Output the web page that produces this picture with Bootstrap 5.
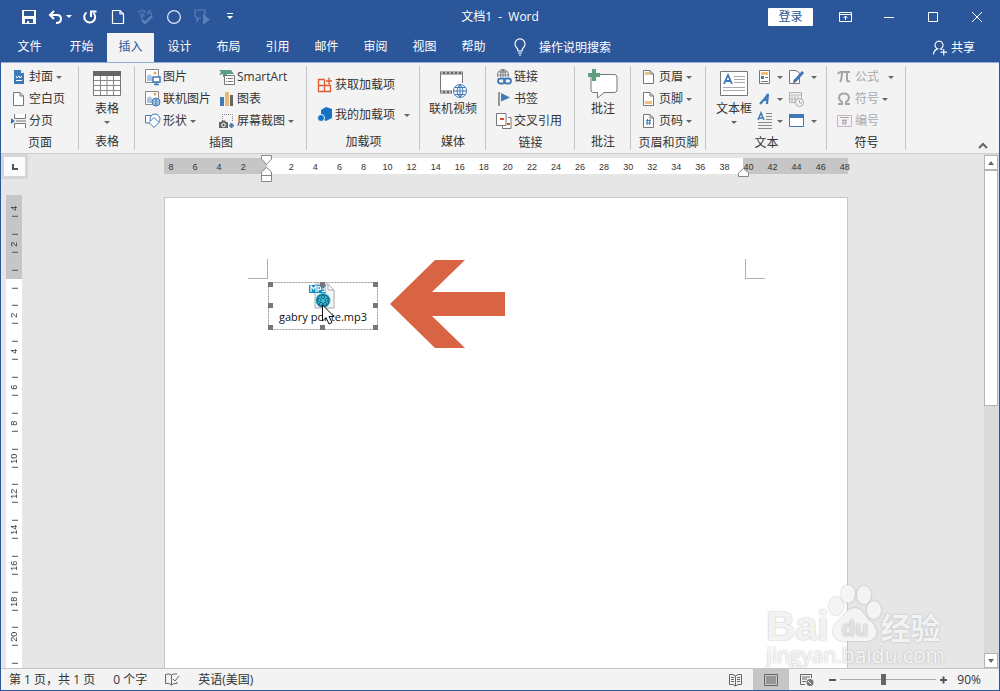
<!DOCTYPE html>
<html lang="zh-CN">
<head>
<meta charset="utf-8">
<meta name="viewport" content="width=device-width, initial-scale=1">
<title>文档1 - Word</title>
<link href="https://cdn.jsdelivr.net/npm/bootstrap@5.3.0/dist/css/bootstrap.min.css" rel="stylesheet">
<style>
:root{--blue:#2b579a;--ink:#333;--line:#c6c6c6}
body{font-family:"Open Sans","Noto Sans CJK SC",sans-serif;font-size:12px;line-height:16px;color:var(--ink);background:#e6e6e6}
button,a.tab{background:none;border:0;padding:0;color:inherit;text-decoration:none;white-space:nowrap}
svg{display:block;flex:none;overflow:visible}
.win{border:1px solid var(--blue);border-top:0}
.top-area{background:var(--blue);color:#fff}
.titlebar{height:33px}
.side{flex:1 1 0}
.quick{margin-left:14px}
.tool{width:28px;height:32px;display:flex;align-items:center;justify-content:center}
.undo{width:33px;gap:4px}
.wbtn{width:44px}
.login{background:#fff;color:var(--blue);width:45px;height:18px;line-height:18px;border-radius:1px;margin-right:10px}
.doc-title{white-space:pre}
.tabs{height:29px}
.tab{width:47px;margin-left:2px;text-align:center;line-height:28px;display:block;height:29px}
.tab.file{width:57px;margin:0}
.tab.on{background:#f3f3f3;color:var(--blue)}
.ribbon{background:#f3f3f3;border-top:1px solid #92abd6;border-bottom:1px solid #cfcfcf;height:92px;padding-top:3px}
.grp{display:flex;flex-direction:column;position:relative;flex:none}
.grp::after{content:"";position:absolute;right:0;top:0;height:84px;border-right:1px solid #c6c6c6}
.grp-body{height:66px;display:flex}
.grp-name{text-align:center;line-height:22px}
.rows{display:grid;grid-auto-flow:column;grid-template-rows:repeat(3,22px);padding-left:10px;align-items:center;justify-content:start}
.rows.two{grid-template-rows:30px 30px;padding-top:4px;align-content:start}
.cmd{display:flex;align-items:center;gap:2px;height:22px}
.cmd.arrow::after,.big.arrow::after,.undo::after{content:"";border:3px solid transparent;border-top-color:#666;border-bottom:0;margin-left:1px}
.undo::after{border-top-color:#fff;margin:0}
.big{display:flex;flex-direction:column;align-items:center;margin:0 auto;padding-top:4px}
.big svg{margin-bottom:5px}
.big.arrow::after{margin:4px 0 0}
.dim{color:#aaa}
.w1{width:78px}.w2{width:56px}.w3{width:172px}.w4{width:113px}.w5{width:66px}.w6{width:89px}.w7{width:56px}.w8{width:75px}.w9{width:121px}.w10{width:79px}
.pics{grid-template-columns:74px auto}
.txt{grid-template-columns:30px 30px;padding-left:6px}
.txt .arrow::after{margin-left:3px}
.textbox{margin:0 0 0 10px}
.work{min-height:0;overflow:hidden;position:relative}
.left-col{width:27px;overflow:hidden}
.selector{height:26px;border:3px solid #d6d6d6;background:#fcfcfc;margin-bottom:16px;display:flex;align-items:center;justify-content:center}
.vtrack{margin:0 6px 0 5px;overflow:hidden;background:linear-gradient(#c6c6c6 84px,#fff 84px);font:9px/16px "Liberation Sans",sans-serif}
.vnums{height:501px;margin-top:-5px;display:flex;flex-direction:column}
.vnums span{flex:1 1 0;display:flex;justify-content:center;align-items:center;position:relative;writing-mode:vertical-rl;transform:rotate(180deg)}
.vnums span::before,.vnums span::after{content:"";position:absolute;left:4px;width:6px;height:1px;background:#555}
.vnums span::before{top:9px}.vnums span::after{bottom:8px}
.vnums span.first::after{display:none}
.hruler{width:684px;height:16px;margin:4px auto 23px;position:relative;background:linear-gradient(90deg,#c6c6c6 103px,#fff 103px,#fff 579px,#c6c6c6 579px);font:9px/18px "Liberation Sans",sans-serif}
.hnums{display:flex;justify-content:space-between;padding-left:1px;margin-right:-3px}
.hnums span{width:12px;text-align:center}
.mk-l{position:absolute;left:97px;top:-3px}
.mk-r{position:absolute;left:574px;top:10px}
.sheet{width:684px;margin:0 auto;background:#fff;border:1px solid var(--line);border-bottom:0;position:relative}
.corners{padding:61px 82px 0 83px}
.corner{width:20px;height:20px;border:solid #b0b0b0;border-width:0 1px 1px 0}
.corner.r{border-width:0 0 1px 1px}
.ole{width:110px;height:48px;margin:3px 0 0 103px;position:relative;text-align:center}
.ole-name{font-size:11px;color:#111;padding-top:27px}
.over{position:absolute;left:0;top:0}
.pointer{position:absolute;left:225px;top:61px}
.sbar{width:15px;background:#dadada;padding-top:1px}
.sbar button,.thumb{background:#fff;border:1px solid #b4b4b4;margin-right:1px}
.sbar button{height:15px;display:flex;align-items:center;justify-content:center}
.thumb{height:236px}
.mark-wm{position:absolute;right:54px;bottom:0;color:rgba(255,255,255,.85);text-shadow:0 0 2px #aaa;pointer-events:none;white-space:nowrap}
.wm-bai{font:bold 40px/32px "Liberation Sans",sans-serif}
.wm-cn{font:bold 30px/32px "Noto Sans CJK SC",sans-serif}
.wm-url{font:21px/26px "Open Sans",sans-serif}
.paw{filter:drop-shadow(0 0 1px #aaa)}
.status{background:#f3f3f3;border-top:1px solid var(--line);height:22px}
.view{width:36px;height:21px;display:flex;align-items:center;justify-content:center}
.view.on{background:#c6c6c6}
.zoom{appearance:none;width:96px;height:16px;background:linear-gradient(#aaa,#aaa) center/100% 1px no-repeat}
.zoom::-webkit-slider-thumb{appearance:none;width:5px;height:11px;background:#666}
.stat{margin-right:18px}
.pct{margin:0 18px 0 10px}
</style>
</head>
<body>
<div class="win vh-100 d-flex flex-column">
<header class="top-area">
  <div class="titlebar d-flex align-items-center">
    <div class="side"><div class="quick d-flex">
      <button class="tool" aria-label="保存"><svg width="14" height="14" viewBox="0 0 14 14"><path fill="#fff" fill-rule="evenodd" d="M0 0H14V14H0ZM2 1V6H12V1ZM3 9V13H5V11H7V13H11V9Z"/></svg></button>
      <button class="tool undo" aria-label="撤消"><svg width="14" height="14" viewBox="0 0 14 14"><path fill="none" stroke="#fff" stroke-width="2" d="M6 1 2 5l4 4M2 5h7q4 0 4 4t-5 4"/></svg></button>
      <button class="tool" aria-label="重复"><svg width="14" height="14" viewBox="0 0 14 14"><path fill="none" stroke="#fff" stroke-width="2" d="M3.5 2.500A5.500 5.500 0 1 0 10.500 3M8 7V1.500H13.500"/></svg></button>
      <button class="tool" aria-label="新建"><svg width="12" height="14" viewBox="0 0 12 14"><path fill="none" stroke="#fff" stroke-width="1.200" d="M.5.5H8L11.500 4V13.500H.5ZM8 .5V4H11.500"/></svg></button>
      <button class="tool" aria-label="拼写和语法"><svg width="16" height="16" viewBox="0 0 16 16" stroke="#5b7fb8" fill="none"><path d="M1 4V2H7V4M4 0V2M2 5H6L4 7V10H3M1 7H7M9 6 11.500 1 14 6M10 4H13"/><path stroke-width="2.500" d="M4 11 7 14 14 7"/></svg></button>
      <button class="tool" aria-label="圆"><svg width="14" height="14" viewBox="0 0 14 14"><circle cx="7" cy="7" r="6.400" fill="none" stroke="#dde6f4" stroke-width="1.200"/></svg></button>
      <button class="tool" aria-label="形状"><svg width="16" height="16" viewBox="0 0 16 16"><path fill="none" stroke="#5b7fb8" stroke-width="1.200" d="M7 9H5L3 12V9H3L1 7V1H11V6"/><path fill="#5b7fb8" d="M9 5 16 10.500 9 16Z"/></svg></button>
      <button class="tool" aria-label="自定义"><svg width="6" height="7" viewBox="0 0 6 7"><path fill="#fff" d="M0 0H6V1H0ZM0 3H6L3 6Z"/></svg></button>
    </div></div>
    <div class="doc-title">文档1  -  Word</div>
    <div class="side d-flex justify-content-end align-items-center">
      <button class="login">登录</button>
      <button class="tool wbtn" aria-label="功能区显示选项"><svg width="13" height="10" viewBox="0 0 13 10"><path fill="none" stroke="#fff" d="M.5.5H12.500V9.500H.5ZM0 2.500H13M6.500 8V4M4.500 6 6.500 4 8.500 6"/></svg></button>
      <button class="tool wbtn" aria-label="最小化"><svg width="10" height="10"><path stroke="#fff" d="M0 5.500H10"/></svg></button>
      <button class="tool wbtn" aria-label="最大化"><svg width="10" height="10"><path fill="none" stroke="#fff" d="M.5.5H9.500V9.500H.5Z"/></svg></button>
      <button class="tool wbtn" aria-label="关闭"><svg width="10" height="10"><path stroke="#fff" d="M0 0 10 10M10 0 0 10"/></svg></button>
    </div>
  </div>
  <nav class="tabs d-flex align-items-center">
    <a class="tab file" href="#">文件</a><a class="tab m-0" href="#">开始</a><a class="tab on" href="#">插入</a><a class="tab" href="#">设计</a><a class="tab" href="#">布局</a><a class="tab" href="#">引用</a><a class="tab" href="#">邮件</a><a class="tab" href="#">审阅</a><a class="tab" href="#">视图</a><a class="tab" href="#">帮助</a>
    <button class="d-flex align-items-center ms-3 gap-2"><svg width="14" height="17" viewBox="1 0 14 17"><path fill="none" stroke="#fff" stroke-width="1.200" d="M6 12Q6 10 4.500 8.500A5 5 0 1 1 11.500 8.500Q10 10 10 12ZM6 14H10M7 16H9"/></svg><span class="ms-1">操作说明搜索</span></button>
    <button class="d-flex align-items-center ms-auto me-4 gap-1"><svg width="14" height="15" viewBox="0 0 15 15"><path fill="none" stroke="#fff" stroke-width="1.200" d="M.5 15Q1 10 5 9A4.300 4.300 0 1 1 8 9L10 10M8 12.500H15M11.500 9V16"/></svg>共享</button>
  </nav>
</header>

<section class="ribbon d-flex position-relative">
  <div class="grp w1"><div class="grp-body"><div class="rows">
    <button class="cmd arrow"><svg width="16" height="16" viewBox="0 0 16 16"><path fill="#3f79b8" d="M3 1H10L13 4V15H3Z"/><path fill="#fff" d="M10 1V4H13Z"/><path fill="none" stroke="#fff" d="M5 7 6 9 8 7 9 9 11 7M5 11.500H11"/></svg>封面</button>
    <button class="cmd"><svg width="16" height="16" viewBox="0 0 16 16"><path fill="#fff" stroke="#777" d="M2.500 1.500H9L12.500 5V14.500H2.500ZM9 1.500V5H12.500"/></svg>空白页</button>
    <button class="cmd"><svg width="16" height="16" viewBox="0 0 16 16"><path fill="#fff" stroke="#777" d="M3.500 1V5.500H14.500V1M3.500 15V10.500H14.500V15M5 8H15"/><path fill="#3f79b8" d="M0 5 4 8 0 11Z"/></svg>分页</button>
  </div></div><div class="grp-name">页面</div></div>

  <div class="grp w2"><div class="grp-body"><button class="big arrow"><svg width="28" height="26" viewBox="0 0 28 26"><path fill="#fff" stroke="#777" d="M.5 2.500H27.500V25.500H.5Z"/><path fill="#666" d="M0 1H28V6H0Z"/><path stroke="#888" d="M1 10.500H27M1 15.500H27M1 20.500H27M7.500 6V25M14 6V25M20.500 6V25"/></svg>表格</button></div><div class="grp-name">表格</div></div>

  <div class="grp w3"><div class="grp-body"><div class="rows pics">
    <button class="cmd"><svg width="16" height="16" viewBox="0 0 16 16"><path fill="#fff" stroke="#888" d="M.5.5H13.500V13.500H.5Z"/><path fill="#a9c5e5" d="M2 12V7L5 5 8 9V12Z"/><circle cx="10" cy="4" r="1.500" fill="#f0a850"/><path fill="#fff" stroke="#3f79b8" stroke-width="1.500" d="M8 8H15V13H8ZM9 15.500H14M11.500 13V15"/></svg>图片</button>
    <button class="cmd"><svg width="16" height="16" viewBox="0 0 16 16"><path fill="#fff" stroke="#888" d="M.5.5H13.500V13.500H.5Z"/><path fill="#a9c5e5" d="M2 12V7L5 5 8 9V12Z"/><circle cx="10" cy="3" r="1.500" fill="#f0a850"/><circle cx="11" cy="11" r="4" fill="#fff" stroke="#3f79b8"/><path fill="none" stroke="#3f79b8" d="M7 11H15M11 7V15M8 9H14M8 13H14"/></svg>联机图片</button>
    <button class="cmd arrow"><svg width="16" height="16" viewBox="0 0 16 16"><path fill="#fff" stroke="#3f79b8" d="M.5 2.500H8V10H.5Z"/><circle cx="10" cy="6" r="5" fill="#fff" stroke="#3f79b8"/><path fill="#fff" stroke="#3f79b8" d="M4 9.500 9 4.500 14 9.500 9 14.500Z"/></svg>形状</button>
    <button class="cmd"><svg width="16" height="16" viewBox="0 0 16 16"><path fill="#5d9e83" d="M0 1H12L15 5H8V8H4V5L0 6L2 3Z"/><path fill="#fff" stroke="#777" d="M5.500 6.500H15.500V15.500H5.500Z"/><path stroke="#777" stroke-dasharray="1 1 5" d="M7 9.500H14M7 12.500H14"/></svg>SmartArt</button>
    <button class="cmd"><svg width="16" height="16" viewBox="0 0 16 16"><path fill="#3f79b8" d="M1 6H5V15H1Z"/><path fill="#e9b872" d="M6 1H10V15H6Z"/><path fill="#666" d="M11 4H14V15H11Z"/></svg>图表</button>
    <button class="cmd arrow"><svg width="16" height="16" viewBox="0 0 16 16"><path fill="none" stroke="#888" stroke-dasharray="1 1" d="M3.500 8V1.500H13.500V9"/><path fill="#666" d="M0 9H2L3 7.500H6L7 9H9V15H0Z"/><circle cx="4.500" cy="12" r="1.800" fill="none" stroke="#fff"/><path stroke="#3f79b8" stroke-width="2" d="M10 12.500H15M12.500 10V15"/></svg>屏幕截图</button>
  </div></div><div class="grp-name">插图</div></div>

  <div class="grp w4"><div class="grp-body"><div class="rows two">
    <button class="cmd"><svg width="16" height="16" viewBox="0 0 16 16"><path fill="none" stroke="#e05a2e" stroke-width="1.300" d="M7.500 2.500H1.500V14.500H13.500V8.500H1.500M7.500 2.500V14.500M9 4H15M12 .500V7.500"/></svg>获取加载项</button>
    <button class="cmd arrow"><svg width="16" height="16" viewBox="0 0 16 16"><path fill="#1473c4" d="M9 0 15 2V11L9 14 7 13V9L4 7V3Z"/><circle cx="4" cy="11" r="3.500" fill="#1473c4" stroke="#f3f3f3"/></svg>我的加载项<span class="me-1"></span></button>
  </div></div><div class="grp-name">加载项</div></div>

  <div class="grp w5"><div class="grp-body"><button class="big"><svg width="28" height="26" viewBox="0 0 28 26"><path fill="#fff" d="M1 1H24V22H1Z"/><path fill="none" stroke="#666" stroke-width="3" d="M1 3H24M1 22H13"/><path fill="none" stroke="#fff" stroke-dasharray="2 2" d="M2 3H24M2 22H13"/><path fill="none" stroke="#777" d="M1.500 2V23M23.500 2V13"/><circle cx="21" cy="21" r="6.500" fill="#fff" stroke="#3f79b8"/><path fill="none" stroke="#3f79b8" d="M14.500 21H27.500M21 14.500V27.500M16 17.500H26M16 24.500H26M21 14.500Q15 21 21 27.500Q27 21 21 14.500"/></svg>联机视频</button></div><div class="grp-name">媒体</div></div>

  <div class="grp w6"><div class="grp-body"><div class="rows">
    <button class="cmd"><svg width="16" height="16" viewBox="0 0 16 16"><circle cx="7" cy="6" r="5.500" fill="#fff" stroke="#777"/><path fill="none" stroke="#777" d="M1.500 6H12.500M7 .5V11M3 3H11M7 .5Q2 6 7 11M7 .5Q12 6 7 11"/><path fill="#f3f3f3" d="M1 8H16V16H1Z"/><rect x="2" y="9.500" width="7" height="5" rx="2.500" fill="none" stroke="#3f79b8" stroke-width="1.800"/><rect x="8" y="9.500" width="7" height="5" rx="2.500" fill="none" stroke="#3f79b8" stroke-width="1.800"/></svg>链接</button>
    <button class="cmd"><svg width="16" height="16" viewBox="0 0 16 16"><path stroke="#777" stroke-width="1.500" d="M3 1V15"/><path fill="#3f79b8" d="M5 2 14 6.500 5 10.500Z"/></svg>书签</button>
    <button class="cmd"><svg width="16" height="16" viewBox="0 0 16 16"><path fill="#fff" stroke="#777" d="M.5.5H10V12.500H.5ZM12 4.500H15V15.500H6.500V12.500H10"/><path stroke="#e0452a" stroke-width="2" d="M4 6H8M11 11H14"/></svg>交叉引用</button>
  </div></div><div class="grp-name">链接</div></div>

  <div class="grp w7"><div class="grp-body"><button class="big"><svg width="30" height="26" viewBox="0 0 30 26"><path fill="#fff" stroke="#777" d="M4.500 4.500H27L29 6V21L27 22.500H16L9.500 28V22.500H4.500L3 21V6Z"/><path stroke="#5d9e83" stroke-width="4" d="M0 5H12M6-1V11"/></svg>批注</button></div><div class="grp-name">批注</div></div>

  <div class="grp w8"><div class="grp-body"><div class="rows">
    <button class="cmd arrow"><svg width="16" height="16" viewBox="0 0 16 16"><path fill="#fff" stroke="#777" d="M2.500 1.500H9L12.500 5V14.500H2.500ZM9 1.500V5H12.500"/><path fill="#f0c078" d="M4 3H8V6H4Z"/></svg>页眉</button>
    <button class="cmd arrow"><svg width="16" height="16" viewBox="0 0 16 16"><path fill="#fff" stroke="#777" d="M2.500 1.500H9L12.500 5V14.500H2.500ZM9 1.500V5H12.500"/><path fill="#f0c078" d="M4 10H11V13H4Z"/></svg>页脚</button>
    <button class="cmd arrow"><svg width="16" height="16" viewBox="0 0 16 16"><path fill="#fff" stroke="#777" d="M2.500 1.500H9L12.500 5V14.500H2.500ZM9 1.500V5H12.500"/><path stroke="#3f79b8" d="M5 7.500H10M5 10H10M6.500 6 6 12M9 6 8.500 12"/></svg>页码</button>
  </div></div><div class="grp-name">页眉和页脚</div></div>

  <div class="grp w9"><div class="grp-body"><button class="big arrow textbox"><svg width="28" height="26" viewBox="0 0 28 26"><path fill="#fff" stroke="#777" d="M.5 1.500H27.500V25.500H.5Z"/><path fill="none" stroke="#3f79b8" stroke-width="1.800" d="M4 14 8 5 12 14M5.500 11H10.500"/><path stroke="#aaa" d="M14 6.500H25M14 9.500H25M14 12.500H25M3 17.500H25M3 20.500H25"/></svg>文本框</button><div class="rows txt">
    <button class="cmd arrow" aria-label="文档部件"><svg width="14" height="16" viewBox="0 0 14 16"><path fill="#fff" stroke="#777" d="M1.500 1.500H11.500V14.500H1.500Z"/><path fill="#f0c078" d="M3 3H10V6H3Z"/><path fill="#3f79b8" d="M3 7H6V10H3Z"/><path stroke="#777" d="M7 8.500H10M3 12.500H10"/></svg></button>
    <button class="cmd arrow" aria-label="艺术字"><svg width="14" height="16" viewBox="0 0 14 16"><path fill="none" stroke="#3f79b8" stroke-width="2.200" d="M2 13Q7 8 10 3L9 13M5 9H10"/></svg></button>
    <button class="cmd arrow" aria-label="首字下沉"><svg width="14" height="16" viewBox="0 0 14 16"><path fill="none" stroke="#3f79b8" stroke-width="1.500" d="M0 7 3 0 6 7M1 5H5"/><path stroke="#888" d="M8 .5H14M8 3.500H14M8 6.500H14M0 9.500H14M0 12.500H14M0 15.500H14"/></svg></button>
    <button class="cmd arrow" aria-label="签名行"><svg width="18" height="16" viewBox="0 0 18 16"><path fill="#fff" stroke="#777" d="M1.500 1.500H8L11.500 4V14.500H1.500Z"/><path stroke="#3f79b8" stroke-width="3" d="M15 3 7 12"/><path fill="#555" d="M8 13 5 14 6 10Z"/></svg></button>
    <button class="cmd" aria-label="日期和时间"><svg width="16" height="16" viewBox="0 0 16 16"><path fill="none" stroke="#b8b0b8" d="M1.500 1.500H13.500V11.500H1.500ZM1 4H14M4 5V12M7 5V12M10 5V9M1 8H9"/><circle cx="11.500" cy="11.500" r="4" fill="#f3f3f3" stroke="#aaa"/><path fill="none" stroke="#aaa" d="M11.500 9V12H14"/></svg></button>
    <button class="cmd arrow" aria-label="对象"><svg width="18" height="16" viewBox="0 0 18 16"><path fill="#fff" stroke="#3f79b8" d="M1.500 1.500H15.500V13.500H1.500Z"/><path fill="#3f79b8" d="M1 1H16V5H1Z"/></svg></button>
  </div></div><div class="grp-name">文本</div></div>

  <div class="grp w10 dim"><div class="grp-body"><div class="rows">
    <button class="cmd arrow"><svg width="16" height="16" viewBox="0 0 16 16"><path fill="none" stroke="#a5a5a5" stroke-width="2" d="M1 5Q2 3 4 3H13M5 3Q5 10 3 13M10 3V11Q10 13 13 12"/></svg>公式<span class="me-1"></span></button>
    <button class="cmd arrow"><svg width="16" height="16" viewBox="0 0 16 16"><path fill="none" stroke="#a5a5a5" stroke-width="2" d="M1 13H5V11Q2 9 2 6.500Q2.500 2.500 7 2.500T12 6.500Q12 9 9 11V13H13"/></svg>符号</button>
    <button class="cmd"><svg width="16" height="16" viewBox="0 0 16 16"><path fill="#f6f0f6" stroke="#c5b5c5" d="M.5 2.500H14.500V13.500H.5Z"/><path stroke="#aaa" d="M3 4.500H12M5 7.500H10M5 10H10M6.500 6 6 12M9 6 8.500 12"/></svg>编号</button>
  </div></div><div class="grp-name text-dark">符号</div></div>
  <button class="ms-auto align-self-end pb-1 pe-2 me-1" aria-label="折叠功能区"><svg width="8" height="6"><path fill="none" stroke="#666" stroke-width="2" d="M0 5 4 1 8 5"/></svg></button>
</section>

<main class="work d-flex flex-fill">
  <div class="left-col d-flex flex-column">
    <div class="selector"><svg width="6" height="6"><path fill="none" stroke="#555" stroke-width="2" d="M1 0V5H6"/></svg></div>
    <div class="vtrack flex-fill"><div class="vnums"><span class="first">4</span><span>2</span><span></span><span>2</span><span>4</span><span>6</span><span>8</span><span>10</span><span>12</span><span>14</span><span>16</span><span>18</span><span>20</span><span></span></div></div>
  </div>
  <div class="flex-fill d-flex flex-column">
    <div class="hruler"><div class="hnums"><span>8</span><span>6</span><span>4</span><span>2</span><span></span><span>2</span><span>4</span><span>6</span><span>8</span><span>10</span><span>12</span><span>14</span><span>16</span><span>18</span><span>20</span><span>22</span><span>24</span><span>26</span><span>28</span><span>30</span><span>32</span><span>34</span><span>36</span><span>38</span><span>40</span><span>42</span><span>44</span><span>46</span><span>48</span></div>
      <svg class="mk-l" width="12" height="28" viewBox="0 0 12 28"><path fill="#fff" stroke="#888" d="M.5.5H10.500V4L5.500 9.500.5 4ZM.5 26.500V17L5.500 12.500 10.500 17V26.500ZM.5 20.500H10.500"/></svg>
      <svg class="mk-r" width="12" height="10" viewBox="0 0 12 10"><path fill="#fff" stroke="#888" d="M.5 8.500V5L5.500.5 10.500 5V8.500Z"/></svg>
    </div>
    <article class="sheet flex-fill">
      <div class="corners d-flex justify-content-between"><div class="corner"></div><div class="corner r"></div></div>
      <div class="ole">
        <svg class="over" width="110" height="48" viewBox="0 0 110 48"><path fill="none" stroke="#999" stroke-dasharray="2 1" d="M.5.5H109.500V47.500H.5Z"/><path fill="#f5f5f5" stroke="#aaa" d="M47 2H60L66 8V26H47Z"/><path fill="#fff" stroke="#aaa" d="M60 2V8H66Z"/><path fill="#1590c4" d="M41 3H58V11H41Z"/><path fill="none" stroke="#fff" stroke-width="1.200" d="M43 10V4L45.500 7 48 4V10M50 10V4.500H52.500V7.500H50M54 4.500H57V9.500H54M54 7H57"/><circle cx="55" cy="18.500" r="7.500" fill="#3cc4e0"/><circle cx="55" cy="18.500" r="6" fill="none" stroke="#17667f" stroke-width="1.200"/><g fill="none" stroke="#17667f"><circle cx="55" cy="15" r="1.600"/><circle cx="51.500" cy="18" r="1.600"/><circle cx="58.500" cy="18" r="1.600"/><circle cx="53" cy="22" r="1.600"/><circle cx="57" cy="22" r="1.600"/></g></svg>
        <div class="ole-name">gabry ponte.mp3</div>
        <svg class="over" width="110" height="48" viewBox="0 0 110 48"><path fill="#777" d="M0 0H5V5H0ZM52 0H57V5H52ZM105 0H110V5H105ZM0 21H5V26H0ZM105 21H110V26H105ZM0 43H5V48H0ZM52 43H57V48H52ZM105 43H110V48H105Z"/><path fill="#fff" stroke="#111" d="M54.500 23V39L58 35.500 61 42 64 40.500 61 34.500H66Z"/></svg>
      </div>
      <svg class="pointer" width="116" height="90" viewBox="0 0 116 90"><path fill="#d96444" d="M0 45 45 1H75L42 33H115V57H42L75 89H45Z"/></svg>
    </article>
  </div>
  <div class="sbar d-flex flex-column"><button aria-label="向上"><svg width="6" height="4"><path fill="#666" d="M0 4 3 0 6 4Z"/></svg></button><div class="thumb"></div><button class="mt-auto" aria-label="向下"><svg width="6" height="4"><path fill="#666" d="M0 0H6L3 4Z"/></svg></button></div>
  <div class="mark-wm">
    <div class="d-flex align-items-end"><span class="wm-bai">Bai</span><svg class="paw" width="52" height="58" viewBox="0 0 52 58"><g fill="#fff" fill-opacity=".85"><ellipse cx="7" cy="22" rx="7" ry="9"/><ellipse cx="19" cy="10" rx="7" ry="9"/><ellipse cx="35" cy="11" rx="7" ry="9"/><ellipse cx="45" cy="26" rx="7" ry="9"/><path d="M26 24C34 24 35 33 42 38 50 45 49 56 38 57H14C3 56 1 45 9 38 16 33 17 24 26 24Z"/></g><text x="26" y="52" text-anchor="middle" font-family="Liberation Sans, sans-serif" font-weight="bold" font-size="22" fill="#e2e2e2">du</text></svg><span class="wm-cn">经验</span></div>
    <div class="wm-url">jingyan.baidu.com</div>
  </div>
</main>

<footer class="status d-flex align-items-center">
  <span class="stat ps-2">第 1 页，共 1 页</span><span class="stat">0 个字</span>
  <button class="stat" aria-label="校对"><svg width="15" height="13" viewBox="0 0 15 13"><path fill="none" stroke="#666" d="M6.500 12V2Q4 0 .5 1.500V10.500Q4 9.500 6.500 12Q8 10 12 10.500V9M6.500 2Q8 .5 12 1M8 6 10 8 14 3"/></svg></button><span>英语(美国)</span>
  <div class="ms-auto d-flex align-items-center">
    <button class="view" aria-label="阅读视图"><svg width="13" height="12" viewBox="0 0 13 12"><path fill="none" stroke="#666" d="M.5.5H4L6.500 2 9 .5H12.500V10.500H9L6.500 12 4 10.500H.5ZM6.500 2V12M2 3.500H5M2 5.500H5M2 7.500H5M8 3.500H11M8 5.500H11M8 7.500H11"/></svg></button>
    <button class="view on" aria-label="页面视图"><svg width="14" height="12" viewBox="0 0 14 12"><path fill="none" stroke="#666" d="M.5.5H13.500V11.500H.5ZM2 3H12M2 5H12M2 7H12M2 9H12"/></svg></button>
    <button class="view" aria-label="Web 版式视图"><svg width="14" height="12" viewBox="0 0 14 12"><path fill="none" stroke="#666" d="M5 10.500H.5V.5H11.500V4M2 3H10M2 5H7M2 7.500H6"/><circle cx="10" cy="8.500" r="3.500" fill="#777"/><path stroke="#fff" d="M8 7 11 10"/></svg></button>
    <button class="ms-1" aria-label="缩小"><svg width="7" height="8"><path stroke="#555" stroke-width="2" d="M0 4H7"/></svg></button>
    <input class="zoom mx-1" type="range" min="10" max="190" value="90" aria-label="缩放">
    <button aria-label="放大"><svg width="7" height="8"><path stroke="#555" stroke-width="2" d="M0 4H7M3.500 .5V7.500"/></svg></button>
    <span class="pct">90%</span>
  </div>
</footer>
</div>
<script src="https://cdn.jsdelivr.net/npm/bootstrap@5.3.0/dist/js/bootstrap.bundle.min.js"></script>
</body>
</html>
